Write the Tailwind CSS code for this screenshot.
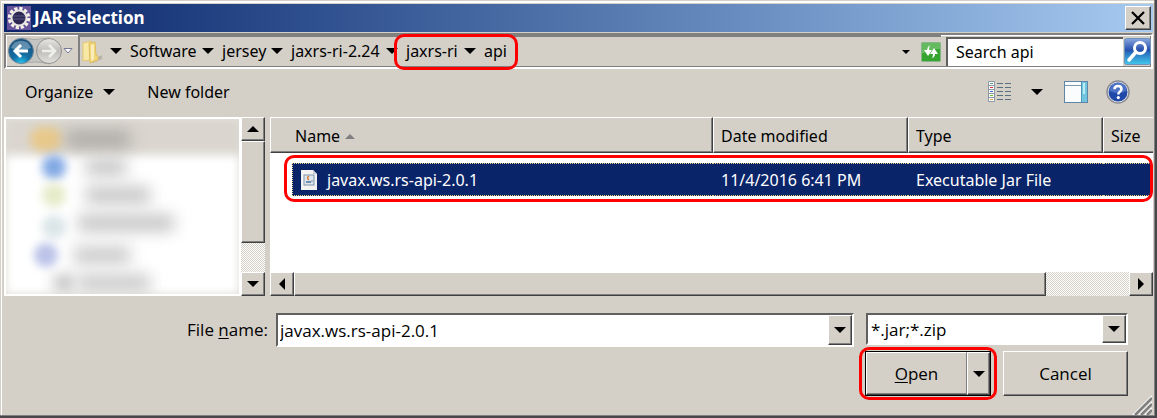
<!DOCTYPE html>
<html lang="en">
<head>
<meta charset="utf-8">
<title>JAR Selection</title>
<script src="https://cdn.jsdelivr.net/npm/@tailwindcss/browser@4"></script>
</head>
<body class="bg-[#d4d0c8] font-['Noto_Sans',sans-serif] text-base leading-5 text-black">
<svg class="hidden">
  <symbol id="down" viewBox="0 0 12 6"><path d="M0 0h12L6 6z" fill="currentColor"/></symbol>
</svg>
<main class="flex min-h-screen flex-col border-r-2 border-b-2 border-[#48484c] p-px shadow-[inset_-1px_-1px_#808080]">
<div class="flex flex-1 flex-col border-t-2 border-l border-white pt-px pr-px pl-[2px]">

  <header class="flex h-7 items-center bg-linear-to-r from-[#0a246a] to-[#a6caf0] pr-[2px] pl-[3px]">
    <svg class="size-6 shrink-0" viewBox="0 0 24 24" aria-hidden="true">
      <rect width="24" height="24" fill="#66529a"/>
      <circle cx="12" cy="12" r="9" fill="none" stroke="#f4f1e8" stroke-width="4.500" stroke-dasharray="3 1.712"/>
      <circle cx="12" cy="12" r="7.500" fill="#2c2853" stroke="#e8e5e1" stroke-width="2"/>
      <path d="M6 10h12M6 13h12" stroke="#5b5687"/>
    </svg>
    <h1 class="ml-[3px] flex-1 text-[17px] font-bold text-white">JAR Selection</h1>
    <button aria-label="Close" class="flex h-6 w-[26px] items-center justify-center border border-t-white border-l-white border-r-[#404040] border-b-[#404040] bg-[#d4d0c8] shadow-[inset_-1px_-1px_#808080]">
      <svg class="size-[14px]" viewBox="0 0 14 14"><path d="M1 1l12 12M13 1L1 13" stroke="#000" stroke-width="2.2"/></svg>
    </button>
  </header>

  <nav class="mt-px flex h-9 items-center border-2 border-[#808080] border-r-white border-b-white shadow-[inset_1px_1px_#fff,inset_-1px_-1px_#808080]">
    <div class="flex w-[72px] shrink-0 items-center pl-[2px]">
      <svg class="h-[30px] w-[66px]" viewBox="0 0 66 30" aria-label="Back and forward">
        <defs>
          <radialGradient id="bk" cx=".5" cy="1" r=".9"><stop offset="0" stop-color="#25c8f3"/><stop offset=".4" stop-color="#146fa4"/><stop offset="1" stop-color="#17517f"/></radialGradient>
          <linearGradient id="fw" x2="0" y2="1"><stop stop-color="#e7e6e3"/><stop offset=".5" stop-color="#bfbeba"/><stop offset="1" stop-color="#e2e1de"/></linearGradient>
        </defs>
        <path d="M13 2Q27 5 41 2v26Q27 24 13 28z" fill="#c4c4c2" stroke="#aaa9a6"/>
        <circle cx="13" cy="15" r="12.5" fill="url(#bk)" stroke="#72899b"/>
        <path d="M3 12a10.500 10.500 0 0 1 20 0Q13 16 3 12" fill="#fff" opacity=".32"/>
        <path d="M20 15H8M13 9l-6 6 6 6" fill="none" stroke="#fff" stroke-width="3"/>
        <circle cx="41" cy="15" r="12.500" fill="url(#fw)" stroke="#929292"/>
        <path d="M34 15h12M41 9l6 6-6 6" fill="none" stroke="#eeeeec" stroke-width="2.500"/>
        <path d="M56 12.500h8l-4 4.500z" fill="#fff" stroke="#77779a"/>
      </svg>
    </div>
    <div class="flex h-full min-w-0 flex-1 items-center border-t-2 border-l-2 border-[#808080] pl-px">
      <svg class="h-6 w-[22px] shrink-0" viewBox="0 0 22 24" aria-hidden="true">
        <path d="M11 20l10-5v4l-9 4z" fill="#b7b3aa"/>
        <path d="M2 3l8-2v19l-8 1z" fill="#f8e8a6" stroke="#e2c670"/>
        <path d="M8 3l6-1 1 13 2 1v4l-8 3z" fill="#f1d77c" stroke="#dfbd5e"/>
        <path d="M10 5l3-1v15l-3 2z" fill="#faedba"/>
      </svg>
      <div class="ml-[7px] flex items-center pb-[3px]">
        <button class="flex w-5 items-center" aria-label="Parent folders"><svg class="h-[6px] w-3"><use href="#down"/></svg></button>
        <button class="flex w-[92px] items-center justify-between pr-2">Software<svg class="h-[6px] w-3"><use href="#down"/></svg></button>
        <button class="flex w-[69px] items-center justify-between pr-2">jersey<svg class="h-[6px] w-3"><use href="#down"/></svg></button>
        <button class="flex w-[115px] items-center justify-between pr-2 whitespace-nowrap">jaxrs-ri-2.24<svg class="h-[6px] w-3"><use href="#down"/></svg></button>
        <div class="relative flex w-[100px] items-center">
          <button class="flex w-[78px] shrink-0 items-center justify-between pr-2 whitespace-nowrap">jaxrs-ri<svg class="h-[6px] w-3"><use href="#down"/></svg></button>
          <button>api</button>
          <span class="pointer-events-none absolute -inset-x-3 -top-[7px] -bottom-[9px] z-10 rounded-[10px] border-3 border-[#ff0000]"></span>
        </div>
      </div>
      <span class="flex-1"></span>
      <button aria-label="Previous locations" class="mr-[11px]"><svg class="h-1 w-2"><use href="#down"/></svg></button>
      <button aria-label="Refresh">
        <svg class="size-5" viewBox="0 0 20 20">
          <rect x=".5" y=".5" width="19" height="19" rx="1" fill="#35a52f" stroke="#87b58a"/>
          <path d="M1 1h18v6Q9 7 1 12z" fill="#83c881" opacity=".6"/>
          <path d="M9 3Q6 5 6 8H3l4 6 4-6H8Q8 5 9 3z" fill="#fff"/>
          <path d="M11 16Q14 15 14 12h3l-4-6-4 6h3q0 2-1 4z" fill="#fff"/>
        </svg>
      </button>
    </div>
    <div class="ml-[5px] flex h-full w-[205px] shrink-0 items-center">
      <input aria-label="Search api" value="Search api" class="h-[29px] min-w-0 flex-1 border-t-2 border-l-2 border-[#606060] bg-white pb-px pl-2 outline-none">
      <button aria-label="Search" class="ml-px">
        <svg class="size-[27px]" viewBox="0 0 27 27">
          <defs><linearGradient id="sr" x2="0" y2="1"><stop stop-color="#89a6df"/><stop offset=".45" stop-color="#254eae"/><stop offset=".55" stop-color="#2871bf"/><stop offset="1" stop-color="#43c9ec"/></linearGradient></defs>
          <rect x=".5" y=".5" width="26" height="26" rx="2" fill="url(#sr)" stroke="#7095bd"/>
          <circle cx="16" cy="10" r="5.500" fill="none" stroke="#fff" stroke-width="3"/>
          <path d="M12 14l-7 8" stroke="#fff" stroke-width="3.500" stroke-linecap="round"/>
        </svg>
      </button>
    </div>
  </nav>

  <div class="flex h-12 items-center pr-[23px] pb-[2px] pl-[21px]">
    <button class="flex items-center gap-[10px]">Organize<svg class="h-[6px] w-3"><use href="#down"/></svg></button>
    <button class="ml-8">New folder</button>
    <span class="flex-1"></span>
    <button aria-label="Change view">
      <svg class="h-[22px] w-6" viewBox="0 0 24 22">
        <path d="M.5.500h6v20h-6zM.5 4.500h6M.5 8.500h6M.5 12.500h6M.5 16.500h6" fill="#fff" stroke="#8b97a4"/>
        <path d="M2 2.500h3" stroke="#5b9a86"/><path d="M2 6.500h3" stroke="#d33"/><path d="M2 10.500h3" stroke="#36c"/><path d="M2 14.500h3" stroke="#7b3"/><path d="M2 18.500h3" stroke="#e9a53b"/>
        <path d="M9 2.500h6m2 0h6M9 6.500h6m2 0h6M9 10.500h6m2 0h6M9 14.500h6m2 0h6M9 18.500h6m2 0h6" stroke="#5c6f80"/>
      </svg>
    </button>
    <button aria-label="More views" class="ml-[19px]"><svg class="h-[6px] w-3"><use href="#down"/></svg></button>
    <button aria-label="Preview pane" class="ml-[21px]">
      <svg class="h-[22px] w-6" viewBox="0 0 24 22">
        <rect x=".5" y=".5" width="23" height="21" fill="#fbfcfd" stroke="#5f86a6"/>
        <path d="M1 4.500h16" stroke="#7e98ad"/><path d="M17 1h6v20h-6z" fill="#72c5df"/><path d="M17.500 1v20" stroke="#4b9abd"/><path d="M19 2h2v11h-2z" fill="#b9edf5"/>
      </svg>
    </button>
    <button aria-label="Help" class="ml-[18px]">
      <svg class="size-6" viewBox="0 0 24 24">
        <circle cx="12" cy="12" r="11" fill="#eee" stroke="#8b8d94" stroke-width="1.500"/>
        <circle cx="12" cy="12" r="9.500" fill="#1f48a8"/><path d="M3.500 11a8.500 8.500 0 0 1 17 0Q12 15 3.500 11" fill="#6b8fdb" opacity=".6"/>
        <path d="M8.500 9.200C8.500 4.800 15.500 5 15.500 9c0 2.600-3.200 2.600-3.200 5.500" fill="none" stroke="#fff" stroke-width="2.500"/><circle cx="12.300" cy="17.600" r="1.600" fill="#fff"/>
      </svg>
    </button>
  </div>

  <div class="flex h-[179px] gap-[5px]">
    <aside class="flex w-[261px] shrink-0" aria-label="Folders">
      <div class="relative flex-1 overflow-hidden border-2 border-white bg-white">
        <div class="absolute -inset-x-2 -top-1 h-10 bg-[#dad6cf] blur-[5px]"></div>
        <div class="absolute inset-0 shadow-[inset_0_0_8px_#dedcd7]"></div>
        <div class="absolute top-2 left-6 h-6 w-8 rounded-full bg-[#e8c88a] blur-[5px]"></div>
        <div class="absolute top-3 left-15 h-4 w-16 bg-[#aaa8a3] blur-[8px]"></div>
        <div class="absolute top-9 left-9 size-6 rounded-full bg-[#82a9e4] blur-[5px]"></div>
        <div class="absolute top-10 left-20 h-4 w-10 bg-[#c2c2c2] blur-[8px]"></div>
        <div class="absolute top-16 left-9 size-6 rounded-full bg-[#e6ebc9] blur-[5px]"></div>
        <div class="absolute top-17 left-20 h-4 w-16 bg-[#c2c2c2] blur-[8px]"></div>
        <div class="absolute top-24 left-9 size-6 rounded-full bg-[#dbe5e8] blur-[5px]"></div>
        <div class="absolute top-24 left-18 h-4 w-24 bg-[#c2c2c2] blur-[8px]"></div>
        <div class="absolute top-31 left-7 size-6 rounded-full bg-[#bbc3e8] blur-[4px]"></div>
        <div class="absolute top-32 left-17 h-4 w-14 bg-[#c6c6c6] blur-[8px]"></div>
        <div class="absolute top-39 left-12 h-4 w-5 bg-[#c0c0c0] blur-[7px]"></div>
        <div class="absolute top-39 left-18 h-4 w-18 bg-[#c6c6c6] blur-[8px]"></div>
      </div>
      <div class="flex w-6 flex-col bg-[repeating-conic-gradient(#fff_0_25%,#d4d0c8_0_50%)] bg-[length:2px_2px]">
        <button aria-label="Scroll up" class="flex h-6 items-center justify-center border border-t-white border-l-white border-r-[#404040] border-b-[#404040] bg-[#d4d0c8] shadow-[inset_-1px_-1px_#808080]"><svg class="h-[6px] w-3 rotate-180"><use href="#down"/></svg></button>
        <div class="h-[102px] border border-t-white border-l-white border-r-[#404040] border-b-[#404040] bg-[#d4d0c8] shadow-[inset_-1px_-1px_#808080]"></div>
        <span class="flex-1"></span>
        <button aria-label="Scroll down" class="flex h-6 items-center justify-center border border-t-white border-l-white border-r-[#404040] border-b-[#404040] bg-[#d4d0c8] shadow-[inset_-1px_-1px_#808080]"><svg class="h-[6px] w-3"><use href="#down"/></svg></button>
      </div>
    </aside>

    <section class="flex min-w-0 flex-1 flex-col bg-white" aria-label="Files">
      <div class="relative flex-1">
        <table class="w-full table-fixed border-separate border-spacing-0 text-left whitespace-nowrap">
          <colgroup><col><col class="w-[195px]"><col class="w-[195px]"><col class="w-[50px]"></colgroup>
          <thead>
            <tr class="h-9 bg-[#d4d0c8]">
              <th class="border border-t-white border-l-white border-r-[#404040] border-b-[#404040] pt-[2px] pl-6 font-normal shadow-[inset_-1px_-1px_#808080]"><span class="flex items-center gap-[5px]">Name<svg class="h-[5px] w-[10px] rotate-180 text-[#808080]"><use href="#down"/></svg></span></th>
              <th class="border border-t-white border-l-white border-r-[#404040] border-b-[#404040] pt-[2px] pl-[7px] font-normal shadow-[inset_-1px_-1px_#808080]">Date modified</th>
              <th class="border border-t-white border-l-white border-r-[#404040] border-b-[#404040] pt-[2px] pl-[7px] font-normal shadow-[inset_-1px_-1px_#808080]">Type</th>
              <th class="border border-r-0 border-t-white border-l-white border-b-[#404040] pt-[2px] pl-[7px] font-normal shadow-[inset_0_-1px_#808080]">Size</th>
            </tr>
          </thead>
          <tbody class="text-white">
            <tr>
              <td class="pt-[10px] pl-[22px]"><div class="flex h-[33px] items-center gap-[9px] border border-r-0 border-dotted border-[#e6cf83] bg-[#0a246a] pl-[7px]">
                <svg class="h-5 w-[18px]" viewBox="0 0 18 20" aria-hidden="true"><path d="M1 0h12l4 4v16H1z" fill="#f3f3f1"/><path d="M13 0v4h4" fill="#c9cdd3"/><rect x="4" y="5" width="10" height="10" fill="#dfe7ee" stroke="#7f95ad"/><path d="M9 6q-3 2 0 4" stroke="#d5762f" fill="none" stroke-width="1.500"/><path d="M6 11h5v2H6z" fill="#6f8fb0"/><path d="M11 11h2" stroke="#6f8fb0"/></svg>
                javax.ws.rs-api-2.0.1</div></td>
              <td class="pt-[10px]"><div class="flex h-[33px] items-center border-y border-dotted border-[#e6cf83] bg-[#0a246a] pl-2">11/4/2016 6:41 PM</div></td>
              <td class="pt-[10px]"><div class="flex h-[33px] items-center border-y border-dotted border-[#e6cf83] bg-[#0a246a] pl-2">Executable Jar File</div></td>
              <td class="pt-[10px] pr-[2px]"><div class="h-[33px] border-y border-dotted border-[#e6cf83] bg-[#0a246a]"></div></td>
            </tr>
          </tbody>
        </table>
        <span class="pointer-events-none absolute top-[38px] right-0 left-[14px] h-[47px] rounded-[10px] border-3 border-[#ff0000]"></span>
      </div>
      <div class="flex h-6 bg-[repeating-conic-gradient(#fff_0_25%,#d4d0c8_0_50%)] bg-[length:2px_2px]">
        <button aria-label="Scroll left" class="flex w-6 items-center justify-center border border-t-white border-l-white border-r-[#404040] border-b-[#404040] bg-[#d4d0c8] shadow-[inset_-1px_-1px_#808080]"><svg class="h-3 w-[6px]" viewBox="0 0 6 12"><path d="M6 0v12L0 6z"/></svg></button>
        <div class="flex flex-1"><div class="w-[90%] border border-t-white border-l-white border-r-[#404040] border-b-[#404040] bg-[#d4d0c8] shadow-[inset_-1px_-1px_#808080]"></div></div>
        <button aria-label="Scroll right" class="flex w-6 items-center justify-center border border-t-white border-l-white border-r-[#404040] border-b-[#404040] bg-[#d4d0c8] shadow-[inset_-1px_-1px_#808080]"><svg class="h-3 w-[6px]" viewBox="0 0 6 12"><path d="M0 0v12l6-6z"/></svg></button>
      </div>
    </section>
  </div>

  <form class="relative flex flex-1 flex-col pt-[17px] pr-[25px] font-['Open_Sans',sans-serif] text-[17px]">
    <div class="flex items-start">
      <label for="file" class="mt-[7px] w-[272px] shrink-0 pr-2 text-right">File <u class="underline-offset-2">n</u>ame:</label>
      <div class="flex h-[34px] min-w-0 flex-1 border-2 border-t-[#606060] border-l-[#606060] border-r-white border-b-white bg-white">
        <input id="file" value="javax.ws.rs-api-2.0.1" class="min-w-0 flex-1 pt-px pl-[2px] outline-none">
        <button type="button" aria-label="Recent files" class="flex w-6 items-center justify-center border border-t-white border-l-white border-r-[#404040] border-b-[#404040] bg-[#d4d0c8] shadow-[inset_-1px_-1px_#808080]"><svg class="h-[6px] w-3"><use href="#down"/></svg></button>
      </div>
      <div class="relative ml-3 h-8 w-[262px] shrink-0 border-2 border-t-[#606060] border-l-[#606060] border-r-white border-b-white bg-white">
        <select aria-label="File type" class="h-full w-full appearance-none pt-[2px] pl-[3px] outline-none"><option>*.jar;*.zip</option></select>
        <span class="pointer-events-none absolute inset-y-0 right-0 flex w-6 items-center justify-center border border-t-white border-l-white border-r-[#404040] border-b-[#404040] bg-[#d4d0c8] shadow-[inset_-1px_-1px_#808080]"><svg class="h-[6px] w-3"><use href="#down"/></svg></span>
      </div>
    </div>
    <div class="mt-1 flex justify-end gap-3">
      <div class="relative flex h-[45px] w-[126px] border border-black">
        <button class="flex-1 border border-t-white border-l-white border-r-[#808080] border-b-[#404040] pt-px shadow-[inset_0_-1px_#808080]"><u class="underline-offset-2">O</u>pen</button>
        <button type="button" aria-label="Open options" class="flex w-[23px] items-center justify-center border border-t-white border-l-white border-r-[#404040] border-b-[#404040] shadow-[inset_-1px_-1px_#808080]"><svg class="h-[6px] w-3"><use href="#down"/></svg></button>
        <span class="pointer-events-none absolute -inset-x-[7px] -inset-y-[5px] rounded-[10px] border-3 border-[#ff0000]"></span>
      </div>
      <button type="button" class="h-[45px] w-[125px] border border-t-white border-l-white border-r-[#404040] border-b-[#404040] pt-px shadow-[inset_-1px_-1px_#808080]">Cancel</button>
    </div>
    <svg class="absolute right-px bottom-0 size-5" viewBox="0 0 20 20" aria-hidden="true"><path d="M1 20L20 1M7 20L20 7M13 20l7-7" stroke="#fff" stroke-width="1.500"/><path d="M3 20L20 3M9 20L20 9M15 20l5-5" stroke="#808080" stroke-width="2.500"/></svg>
  </form>
</div>
</main>
</body>
</html>
